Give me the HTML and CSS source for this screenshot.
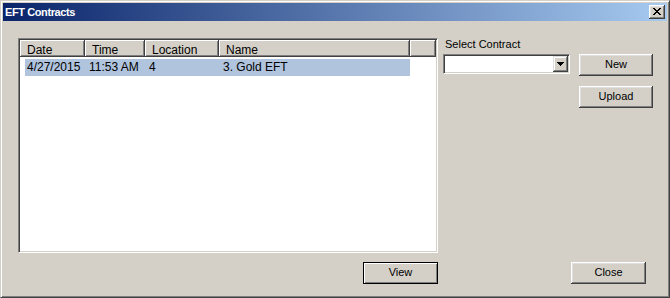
FILE: index.html
```html
<!doctype html>
<html>
  <head>
    <title>EFT Contracts</title>
    <link rel="stylesheet" href="styles.css">
  </head>
  <body>
    <div class="window">
      <div class="titlebar">
        <span class="title">EFT Contracts</span>
        <div class="title-close">
          <svg width="8" height="7" viewBox="0 0 8 7">
            <path d="M0 0h2v1H0zM6 0h2v1H6zM1 1h2v1H1zM5 1h2v1H5zM2 2h4v1H2zM3 3h2v1H3zM2 4h4v1H2zM1 5h2v1H1zM5 5h2v1H5zM0 6h2v1H0zM6 6h2v1H6z" fill="#000"/>
          </svg>
        </div>
      </div>

      <div class="client">
        <div class="top-row">
          <div class="listview">
            <div class="lv-header">
              <div class="lv-col col-date">Date</div>
              <div class="lv-col col-time">Time</div>
              <div class="lv-col col-location">Location</div>
              <div class="lv-col col-name">Name</div>
              <div class="lv-col col-fill"></div>
            </div>
            <div class="lv-row selected">
              <span class="cell cell-date">4/27/2015</span>
              <span class="cell cell-time">11:53 AM</span>
              <span class="cell cell-location">4</span>
              <span class="cell cell-name">3. Gold EFT</span>
            </div>
          </div>

          <div class="side">
            <div class="label">Select Contract</div>
            <div class="side-row">
              <div class="combo">
                <div class="combo-btn">
                  <svg width="7" height="4" viewBox="0 0 7 4">
                    <path d="M0 0h7v1H0zM1 1h5v1H1zM2 2h3v1H2zM3 3h1v1H3z" fill="#000"/>
                  </svg>
                </div>
              </div>
              <div class="side-buttons">
                <button class="btn">New</button>
                <button class="btn">Upload</button>
              </div>
            </div>
          </div>
        </div>

        <div class="bottom-row">
          <button class="btn btn-default btn-view">View</button>
          <button class="btn btn-close">Close</button>
        </div>
      </div>
    </div>
  </body>
</html>
```

FILE: styles.css
```css
body {
    margin: 0;
    font-family: "Liberation Sans", Arial, sans-serif;
    color: #000;
}

.window {
    box-sizing: border-box;
    width: 670px;
    height: 298px;
    padding: 2px;
    background: #d4d0c8;
    border: 1px solid;
    border-color: #d4d0c8 #404040 #404040 #d4d0c8;
    box-shadow: inset 1px 1px #fff, inset -1px -1px #808080;
}

.titlebar {
    display: flex;
    align-items: flex-start;
    height: 18px;
    background: linear-gradient(to right, #0a246a, #a6caf0);
}

.title {
    flex: 1;
    padding-left: 2px;
    font-family: "Liberation Sans Narrow", "Liberation Sans", sans-serif;
    font-size: 11px;
    font-weight: bold;
    letter-spacing: -0.4px;
    line-height: 18px;
    color: #fff;
}

.title-close {
    display: flex;
    align-items: center;
    justify-content: center;
    box-sizing: border-box;
    width: 16px;
    height: 14px;
    margin: 2px 2px 0 0;
    padding-bottom: 1px;
    background: #d4d0c8;
    box-shadow: inset -1px -1px #404040, inset 1px 1px #fff, inset -2px -2px #808080, inset 2px 2px #dfdfdf;
}

.title-close svg,
.combo-btn svg {
    display: block;
}

.client {
    padding: 15px 0 0 15px;
}

.top-row {
    display: flex;
    align-items: flex-start;
}

/* list view */

.listview {
    box-sizing: border-box;
    width: 420px;
    height: 215px;
    margin-top: 2px;
    padding: 1px;
    background: #fff;
    border: 1px solid;
    border-color: #808080 #fff #fff #808080;
    box-shadow: inset 1px 1px #404040, inset -1px -1px #d4d0c8;
    font-size: 12px;
}

.lv-header {
    display: flex;
    height: 17px;
    background: #d4d0c8;
}

.lv-col {
    box-sizing: border-box;
    height: 17px;
    padding: 3px 0 0 7px;
    line-height: 14px;
    white-space: nowrap;
    box-shadow: inset -1px -1px #404040, inset 1px 1px #fff, inset -2px -2px #808080;
}

.col-date { width: 65px; }
.col-time { width: 60px; }
.col-location { width: 74px; }
.col-name { width: 191px; }
.col-fill { flex: 1; }

.lv-row {
    display: flex;
    width: 385px;
    height: 17px;
    margin: 2px 0 0 5px;
    line-height: 17px;
}

.lv-row.selected {
    background: #b0c4de;
}

.cell {
    box-sizing: border-box;
    padding-left: 4px;
    white-space: nowrap;
}

.cell-date { width: 60px; padding-left: 2px; }
.cell-time { width: 60px; }
.cell-location { width: 74px; }
.cell-name { width: 191px; }

/* right side */

.side {
    margin-left: 5px;
}

.label {
    padding-left: 2px;
    font-size: 11px;
    line-height: 16px;
}

.side-row {
    display: flex;
    align-items: flex-start;
    margin-top: 2px;
}

.combo {
    display: flex;
    justify-content: flex-end;
    box-sizing: border-box;
    width: 127px;
    height: 20px;
    padding: 1px;
    background: #fff;
    border: 1px solid;
    border-color: #808080 #fff #fff #808080;
    box-shadow: inset 1px 1px #404040, inset -1px -1px #d4d0c8;
}

.combo-btn {
    display: flex;
    align-items: center;
    justify-content: center;
    width: 15px;
    height: 16px;
    background: #d4d0c8;
    box-shadow: inset -1px -1px #404040, inset 1px 1px #dfdfdf, inset -2px -2px #808080, inset 2px 2px #fff;
}

.side-buttons {
    display: flex;
    flex-direction: column;
    gap: 10px;
    margin-left: 9px;
}

.btn {
    box-sizing: border-box;
    width: 74px;
    height: 22px;
    margin: 0;
    padding: 0 0 1px;
    border: 0;
    background: #d4d0c8;
    font-family: "Liberation Sans", Arial, sans-serif;
    font-size: 11px;
    line-height: 21px;
    color: #000;
    box-shadow: inset -1px -1px #404040, inset 1px 1px #fff, inset -2px -2px #808080, inset 2px 2px #dfdfdf;
}

.btn-default {
    border: 1px solid #000;
    line-height: 19px;
    box-shadow: inset 1px 1px #fff, inset -1px -1px #808080;
}

.bottom-row {
    display: flex;
    margin-top: 9px;
}

.btn-view {
    width: 75px;
    margin-left: 345px;
}

.btn-close {
    width: 75px;
    margin-left: 133px;
}
```
